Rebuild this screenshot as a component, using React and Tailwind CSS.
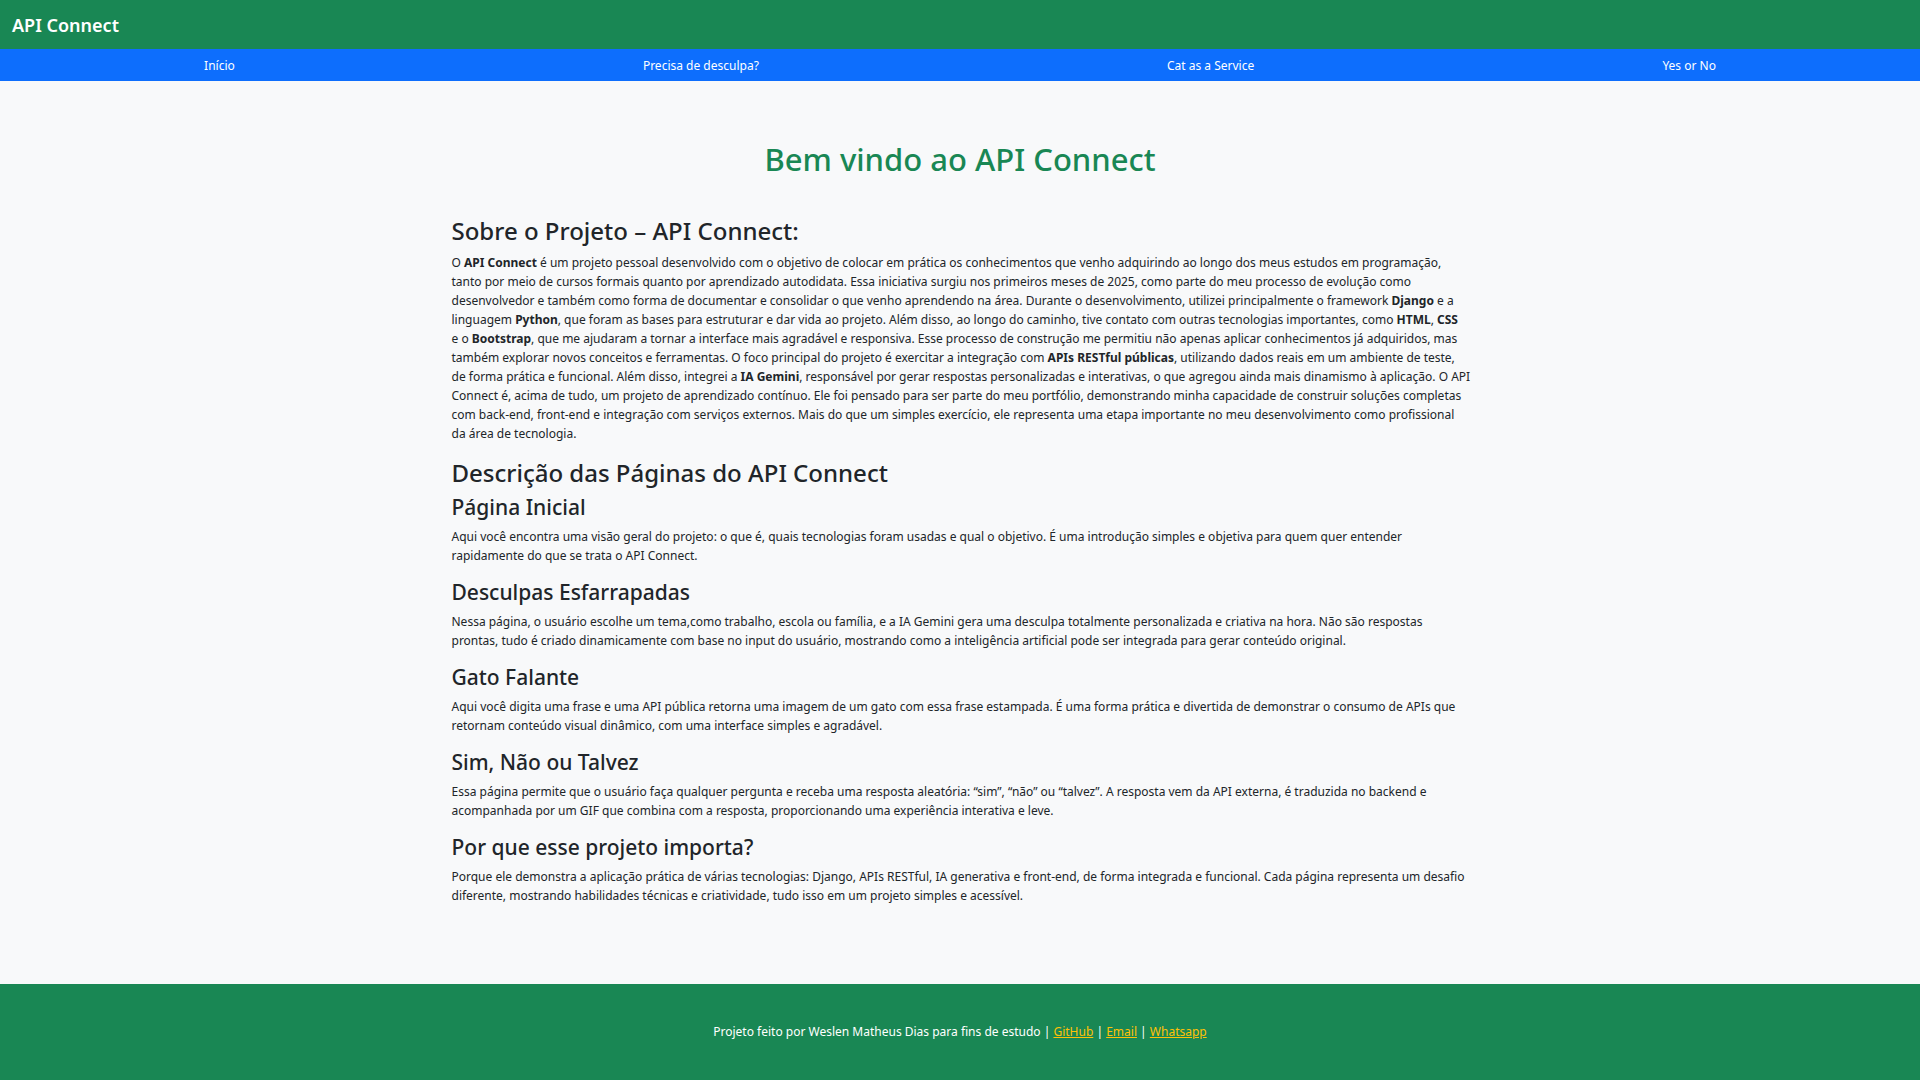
const nav = ["Início", "Precisa de desculpa?", "Cat as a Service", "Yes or No"];

const links = ["GitHub", "Email", "Whatsapp"];

const pages = [
  {
    title: "Página Inicial",
    lines: [
      "Aqui você encontra uma visão geral do projeto: o que é, quais tecnologias foram usadas e qual o objetivo. É uma introdução simples e objetiva para quem quer entender",
      "rapidamente do que se trata o API Connect.",
    ],
  },
  {
    title: "Desculpas Esfarrapadas",
    lines: [
      "Nessa página, o usuário escolhe um tema,como trabalho, escola ou família, e a IA Gemini gera uma desculpa totalmente personalizada e criativa na hora. Não são respostas",
      "prontas, tudo é criado dinamicamente com base no input do usuário, mostrando como a inteligência artificial pode ser integrada para gerar conteúdo original.",
    ],
  },
  {
    title: "Gato Falante",
    lines: [
      "Aqui você digita uma frase e uma API pública retorna uma imagem de um gato com essa frase estampada. É uma forma prática e divertida de demonstrar o consumo de APIs que",
      "retornam conteúdo visual dinâmico, com uma interface simples e agradável.",
    ],
  },
  {
    title: "Sim, Não ou Talvez",
    lines: [
      "Essa página permite que o usuário faça qualquer pergunta e receba uma resposta aleatória: “sim”, “não” ou “talvez”. A resposta vem da API externa, é traduzida no backend e",
      "acompanhada por um GIF que combina com a resposta, proporcionando uma experiência interativa e leve.",
    ],
  },
  {
    title: "Por que esse projeto importa?",
    lines: [
      "Porque ele demonstra a aplicação prática de várias tecnologias: Django, APIs RESTful, IA generativa e front-end, de forma integrada e funcional. Cada página representa um desafio",
      "diferente, mostrando habilidades técnicas e criatividade, tudo isso em um projeto simples e acessível.",
    ],
  },
];

const about = [
  <>O <b>API Connect</b> é um projeto pessoal desenvolvido com o objetivo de colocar em prática os conhecimentos que venho adquirindo ao longo dos meus estudos em programação,</>,
  <>tanto por meio de cursos formais quanto por aprendizado autodidata. Essa iniciativa surgiu nos primeiros meses de 2025, como parte do meu processo de evolução como</>,
  <>desenvolvedor e também como forma de documentar e consolidar o que venho aprendendo na área. Durante o desenvolvimento, utilizei principalmente o framework <b>Django</b> e a</>,
  <>linguagem <b>Python</b>, que foram as bases para estruturar e dar vida ao projeto. Além disso, ao longo do caminho, tive contato com outras tecnologias importantes, como <b>HTML</b>, <b>CSS</b></>,
  <>e o <b>Bootstrap</b>, que me ajudaram a tornar a interface mais agradável e responsiva. Esse processo de construção me permitiu não apenas aplicar conhecimentos já adquiridos, mas</>,
  <>também explorar novos conceitos e ferramentas. O foco principal do projeto é exercitar a integração com <b>APIs RESTful públicas</b>, utilizando dados reais em um ambiente de teste,</>,
  <>de forma prática e funcional. Além disso, integrei a <b>IA Gemini</b>, responsável por gerar respostas personalizadas e interativas, o que agregou ainda mais dinamismo à aplicação. O API</>,
  <>Connect é, acima de tudo, um projeto de aprendizado contínuo. Ele foi pensado para ser parte do meu portfólio, demonstrando minha capacidade de construir soluções completas</>,
  <>com back-end, front-end e integração com serviços externos. Mais do que um simples exercício, ele representa uma etapa importante no meu desenvolvimento como profissional</>,
  <>da área de tecnologia.</>,
];

function Paragraph({ lines }) {
  return (
    <p className="text-xs leading-[19px] xl:whitespace-nowrap">
      {lines.map((line, i) => (
        <span key={i} className="xl:block">{line} </span>
      ))}
    </p>
  );
}

export default function App() {
  return (
    <div className="flex min-h-screen flex-col bg-[#f8f9fa] font-['Noto_Sans',sans-serif] text-[#212529]">
      <header className="flex bg-[#198754] px-3 pt-[9px] pb-2 text-white">
        <a href="#" className="text-lg leading-8 font-semibold">API Connect</a>
      </header>
      <nav className="flex bg-[#0d6efd] pt-[2px] text-xs leading-[30px] text-white">
        {nav.map((item) => (
          <a key={item} href="#" className="flex-auto text-center">{item}</a>
        ))}
      </nav>
      <main className="mx-auto w-full max-w-[1017px] flex-1 pt-14 pb-16">
        <h1 className="mb-9 text-center text-[31px] leading-[44px] font-medium text-[#198754]">Bem vindo ao API Connect</h1>
        <h2 className="mb-2 text-2xl leading-7 font-medium">Sobre o Projeto – API Connect:</h2>
        <Paragraph lines={about} />
        <h2 className="mt-4 mb-2 text-2xl leading-7 font-medium">Descrição das Páginas do API Connect</h2>
        <div className="flex flex-col gap-[15px]">
          {pages.map((page) => (
            <section key={page.title}>
              <h3 className="mb-2 text-[21px] leading-6 font-medium">{page.title}</h3>
              <Paragraph lines={page.lines} />
            </section>
          ))}
        </div>
      </main>
      <footer className="bg-[#198754] py-9 text-center text-xs leading-6 text-white">
        Projeto feito por Weslen Matheus Dias para fins de estudo
        {links.map((link) => (
          <span key={link}> | <a href="#" className="text-[#ffc107] underline">{link}</a></span>
        ))}
      </footer>
    </div>
  );
}
